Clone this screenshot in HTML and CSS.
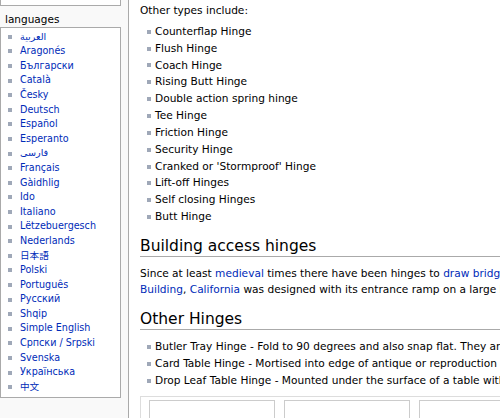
FILE: index.html
```html
<!DOCTYPE html>
<html lang="en">
<head>
<meta charset="utf-8">
<title>Hinge</title>
<link rel="stylesheet" href="styles.css">
</head>
<body>
<div class="page">
  <aside class="sidebar">
    <div class="portlet portlet-top">
      <ul class="plist">
        <li><a href="#">Cite this page</a></li>
      </ul>
    </div>
    <h5 class="portlet-title">languages</h5>
    <div class="portlet portlet-lang">
      <ul class="plist">
        <li><a href="#" lang="ar">العربية</a></li>
        <li><a href="#">Aragonés</a></li>
        <li><a href="#">Български</a></li>
        <li><a href="#">Català</a></li>
        <li><a href="#">Česky</a></li>
        <li><a href="#">Deutsch</a></li>
        <li><a href="#">Español</a></li>
        <li><a href="#">Esperanto</a></li>
        <li><a href="#" lang="fa">فارسی</a></li>
        <li><a href="#">Français</a></li>
        <li><a href="#">Gàidhlig</a></li>
        <li><a href="#">Ido</a></li>
        <li><a href="#">Italiano</a></li>
        <li><a href="#">Lëtzebuergesch</a></li>
        <li><a href="#">Nederlands</a></li>
        <li><a href="#" lang="ja">日本語</a></li>
        <li><a href="#">Polski</a></li>
        <li><a href="#">Português</a></li>
        <li><a href="#">Русский</a></li>
        <li><a href="#">Shqip</a></li>
        <li><a href="#">Simple English</a></li>
        <li><a href="#">Српски / Srpski</a></li>
        <li><a href="#">Svenska</a></li>
        <li><a href="#">Українська</a></li>
        <li><a href="#" lang="zh">中文</a></li>
      </ul>
    </div>
  </aside>
  <main class="content">
    <p class="intro">Other types include:</p>
    <ul class="blist">
      <li>Counterflap Hinge</li>
      <li>Flush Hinge</li>
      <li>Coach Hinge</li>
      <li>Rising Butt Hinge</li>
      <li>Double action spring hinge</li>
      <li>Tee Hinge</li>
      <li>Friction Hinge</li>
      <li>Security Hinge</li>
      <li>Cranked or 'Stormproof' Hinge</li>
      <li>Lift-off Hinges</li>
      <li>Self closing Hinges</li>
      <li>Butt Hinge</li>
    </ul>
    <h2 class="section">Building access hinges</h2>
    <p class="para"><span class="line">Since at least <a href="#">medieval</a> times there have been hinges to <a href="#">draw bridges</a> for defensive purposes for fortified buildings. For example, the <a href="#">Dakin</a></span><span class="line"><a href="#">Building</a>, <a href="#">California</a> was designed with its entrance ramp on a large hinge to allow for ground movement.</span></p>
    <h2 class="section section-2">Other Hinges</h2>
    <ul class="blist nowrap">
      <li>Butler Tray Hinge - Fold to 90 degrees and also snap flat. They are used on butler tray tables.</li>
      <li>Card Table Hinge - Mortised into edge of antique or reproduction card tables.</li>
      <li>Drop Leaf Table Hinge - Mounted under the surface of a table with drop leaves.</li>
    </ul>
    <div class="gallery">
      <div class="gbox"></div>
      <div class="gbox"></div>
      <div class="gbox"></div>
    </div>
  </main>
</div>
</body>
</html>
```

FILE: styles.css
```css
html, body {
  margin: 0;
  padding: 0;
  overflow: hidden;
}
body {
  background: #f9f9f9;
  font-family: "DejaVu Sans", "Noto Sans CJK JP", sans-serif;
  color: #000;
  width: 500px;
  height: 418px;
}
a {
  color: #002bb8;
  text-decoration: none;
}
.page {
  display: flex;
  align-items: flex-start;
  width: 1100px;
}
.sidebar {
  flex: none;
  width: 121px;
  margin-right: 7px;
}
.portlet {
  background: #fff;
  border: 1px solid #aaa;
  padding: 2px 4px 3px 6px;
}
.portlet-top {
  margin-top: -16px;
}
.portlet-lang {
  padding-bottom: 3px;
}
.portlet-title {
  margin: 0;
  padding: 5px 0 0 5px;
  height: 16px;
  font-size: 10.5px;
  font-weight: normal;
  line-height: 16px;
}
.plist {
  list-style: none;
  margin: 0;
  padding: 0;
  font-size: 9.6px;
  line-height: 14.6px;
}
.plist li {
  display: flex;
  align-items: center;
  white-space: nowrap;
}
.plist li::before,
.blist li::before {
  content: "";
  flex: none;
  width: 4px;
  height: 4px;
  background: #9fa8b8;
}
.plist li::before {
  margin-left: 1px;
  margin-right: 8px;
}
.content {
  flex: none;
  width: 960px;
  background: #fff;
  border-left: 1px solid #aaa;
  padding: 0 0 40px 11px;
  font-size: 10.6px;
  line-height: 16.85px;
}
.intro {
  margin: 2px 0 4px 0;
}
.blist {
  list-style: none;
  margin: 0;
  padding: 0 0 0 7px;
}
.blist li {
  display: flex;
  align-items: center;
}
.blist li::before {
  margin-right: 4px;
  margin-top: 1px;
}
.nowrap li {
  white-space: nowrap;
}
.section {
  margin: 11px 0 8px 0;
  font-size: 15.5px;
  font-weight: normal;
  line-height: 20px;
  border-bottom: 1px solid #aaa;
  padding-bottom: 0;
}
.section-2 {
  margin-top: 12px;
}
.para {
  margin: 0;
  line-height: 16px;
}
.para .line {
  display: block;
  white-space: nowrap;
}
.gallery {
  margin-top: 7px;
  border: 1px solid #ddd;
  display: flex;
  gap: 9px;
  padding: 3px 8px;
  width: 700px;
}
.gbox {
  flex: none;
  width: 124px;
  height: 120px;
  border: 1px solid #ccc;
  background: #fff;
}
```
